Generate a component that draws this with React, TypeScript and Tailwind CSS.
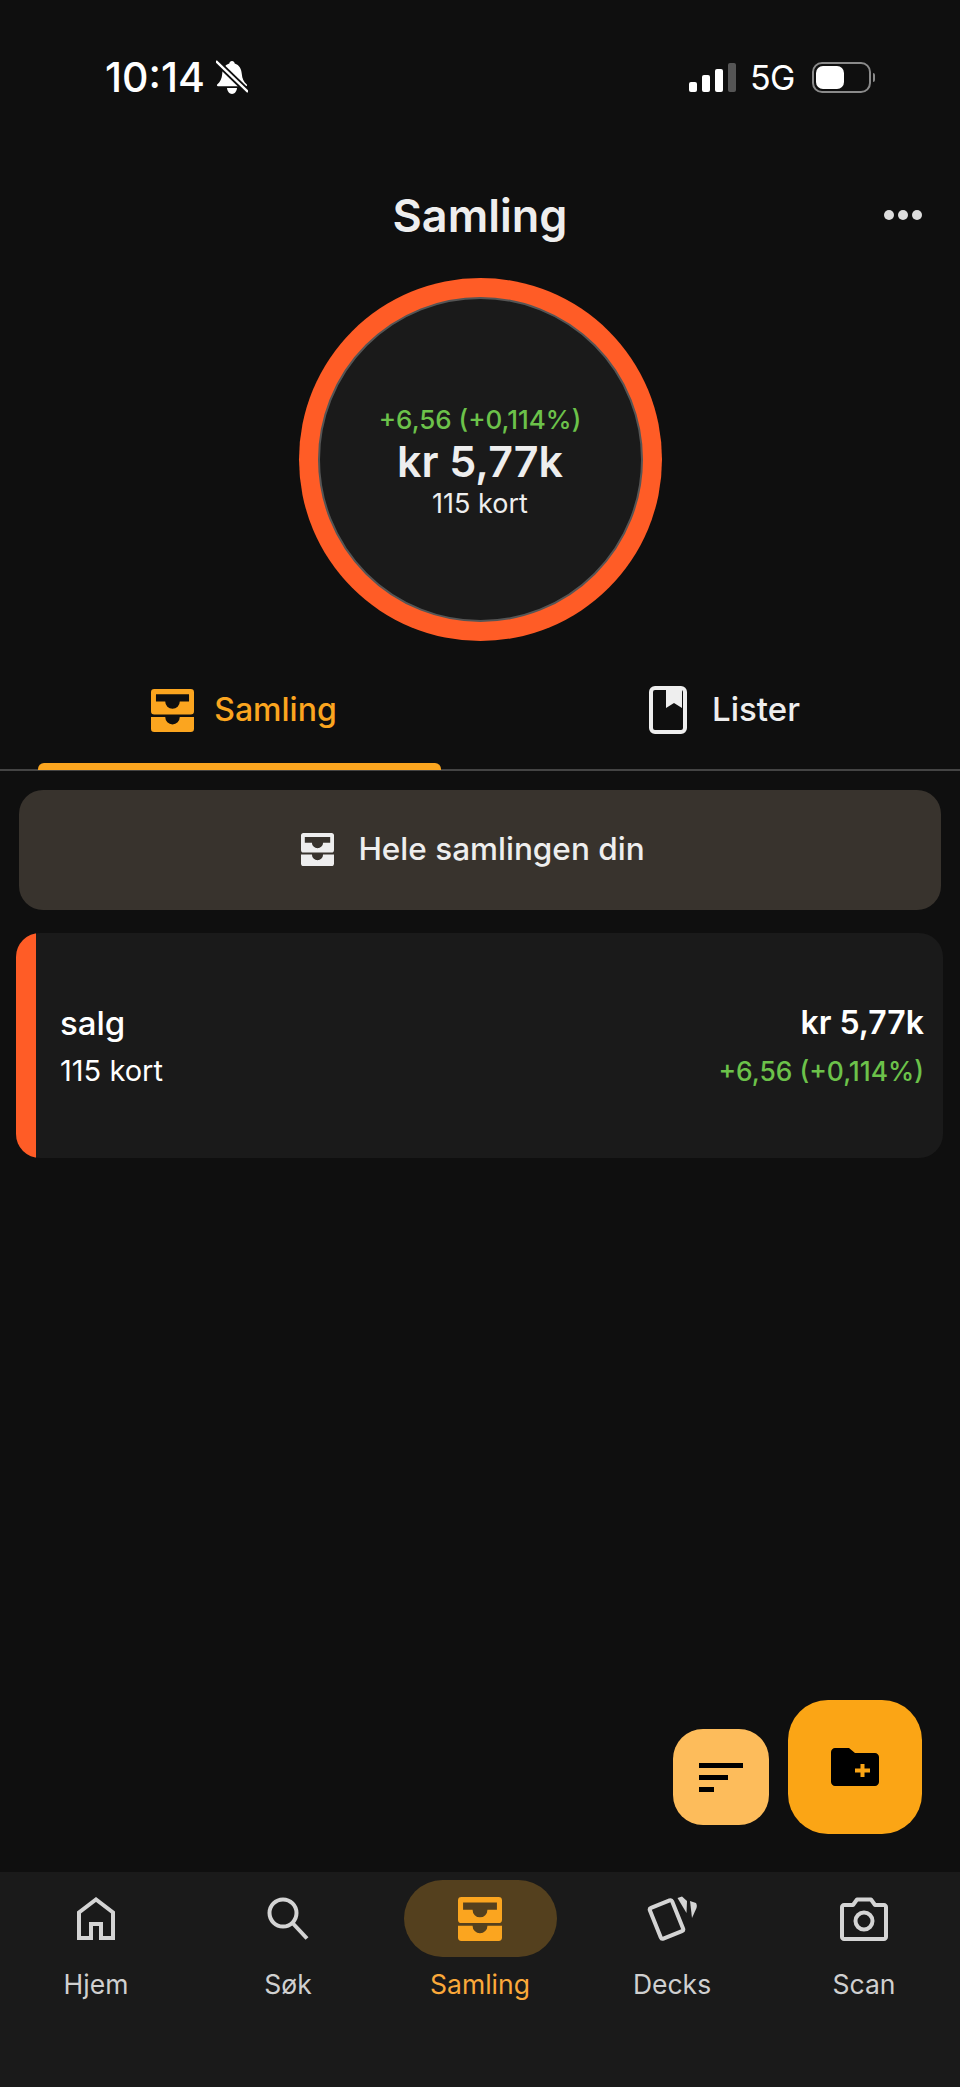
const font = { fontFamily: "Inter, 'Noto Sans', sans-serif" };

function Tray({ className }: { className: string }) {
  return (
    <svg viewBox="0 0 130 130" className={className} fill="currentColor">
      <path
        fillRule="evenodd"
        d="M10 0H120a10 10 0 0 1 10 10V67a10 10 0 0 1-10 10H10A10 10 0 0 1 0 67V10A10 10 0 0 1 10 0ZM15 16V38H43A22 22 0 0 0 87 38H115V16Z"
      />
      <path d="M0 85H43A22 22 0 0 0 87 85H130V120a10 10 0 0 1-10 10H10a10 10 0 0 1-10-10Z" />
    </svg>
  );
}

function BookIcon() {
  return (
    <svg viewBox="0 0 38 48" className="h-[48px] w-[38px]" fill="none">
      <rect x="2" y="2" width="34" height="44" rx="4" stroke="#eeeeee" strokeWidth="4" />
      <path d="M17 2H33V22L25 17L17 22Z" fill="#eeeeee" />
    </svg>
  );
}

function BellOff() {
  return (
    <svg viewBox="0 0 32 35" className="ml-[11px] h-[35px] w-[32px]" fill="#ffffff">
      <path d="M16 1c-1.5 0-2.5 1-2.7 2.5C8.5 5 6.5 9 6.2 14c-.3 4.5-2 8-5 10.5-.6.6-.2 1.8.8 1.8h28c1 0 1.4-1.2.8-1.8-3-2.5-4.7-6-5-10.5-.3-5-2.3-9-7.1-10.5C18.5 2 17.5 1 16 1Z" />
      <path d="M11 28h10c-.2 3.200-2.400 6-5 6s-4.800-2.800-5-6Z" />
      <path d="M0 1L32 32" stroke="#0f0f0f" strokeWidth="6" />
      <path d="M0 1L32 32" stroke="#ffffff" strokeWidth="2.4" />
    </svg>
  );
}

function NavIcon({ name }: { name: string }) {
  if (name === "home")
    return (
      <svg viewBox="0 0 38 43" className="h-[43px] w-[38px]" fill="none" stroke="#d4d4d4" strokeWidth="4">
        <path d="M2 41V15.5L19 2.5L36 15.5V41H24V27H14V41Z" strokeLinejoin="miter" />
      </svg>
    );
  if (name === "search")
    return (
      <svg viewBox="0 0 42 43" className="h-[43px] w-[42px]" fill="none" stroke="#d4d4d4" strokeWidth="4">
        <circle cx="16" cy="16" r="13.5" />
        <path d="M25.5 26L40 41.5" />
      </svg>
    );
  if (name === "decks")
    return (
      <svg viewBox="0 0 50 46" className="h-[46px] w-[50px]" fill="none">
        <rect x="7.500" y="7" width="24" height="33" rx="2" transform="rotate(-22 19.500 23.500)" stroke="#d4d4d4" strokeWidth="4" />
        <path d="M30.500 2L35 0.500L40 5L39.500 17Z" fill="#d4d4d4" />
        <path d="M43 5L49 7C50 9 50 10 49.500 12L45 22Z" fill="#d4d4d4" />
      </svg>
    );
  return (
    <svg viewBox="0 0 48 44" className="h-[44px] w-[48px]" fill="none" stroke="#d4d4d4" strokeWidth="4">
      <path d="M4 8H13L17 2.500H31L35 8H44C45 8 46 9 46 10V40C46 41 45 42 44 42H4C3 42 2 41 2 40V10C2 9 3 8 4 8Z" strokeLinejoin="round" />
      <circle cx="24" cy="24" r="8.500" />
    </svg>
  );
}

const navItems = [
  { label: "Hjem", icon: "home" },
  { label: "Søk", icon: "search" },
  { label: "Samling", icon: "tray" },
  { label: "Decks", icon: "decks" },
  { label: "Scan", icon: "camera" },
];

export default function App() {
  return (
    <div style={font} className="relative flex h-[2087px] w-[960px] flex-col overflow-hidden bg-[#0f0f0f] text-[#eeeeee]">
      {/* status bar */}
      <div className="flex h-[190px] items-start justify-between pt-[55px] pl-[105px] pr-[85px]">
        <div className="flex h-[45px] items-center">
          <span className="text-[41px] leading-none font-medium text-white">10:14</span>
          <BellOff />
        </div>
        <div className="flex h-[45px] items-center">
          <div className="flex h-[29px] items-end gap-[5px]">
            <span className="h-[10px] w-[8px] rounded-[2px] bg-white" />
            <span className="h-[17px] w-[8px] rounded-[2px] bg-white" />
            <span className="h-[23px] w-[8px] rounded-[2px] bg-white" />
            <span className="h-[29px] w-[8px] rounded-[2px] bg-[#555555]" />
          </div>
          <span className="ml-[14px] text-[34px] leading-none tracking-[-0.5px] text-white">5G</span>
          <div className="ml-[17px] flex h-[31px] w-[59px] items-center rounded-[10px] border-2 border-[#8a8a8a] px-[2px]">
            <span className="h-[23px] w-[28px] rounded-[7px] bg-white" />
          </div>
          <span className="ml-[2px] h-[9px] w-[2px] rounded-r-full bg-[#8a8a8a]" />
        </div>
      </div>

      {/* header */}
      <div className="relative flex h-[50px] items-center justify-center">
        <h1 className="text-[45px] leading-none font-semibold">Samling</h1>
        <div className="absolute top-[20px] left-[884px] flex gap-[4px]">
          <span className="h-[10px] w-[10px] rounded-full bg-[#dddddd]" />
          <span className="h-[10px] w-[10px] rounded-full bg-[#dddddd]" />
          <span className="h-[10px] w-[10px] rounded-full bg-[#dddddd]" />
        </div>
      </div>

      {/* value ring */}
      <div className="mt-[38px] flex justify-center">
        <div className="flex h-[363px] w-[363px] items-center justify-center rounded-full bg-[#ff5c26]">
          <div className="flex h-[325px] w-[325px] flex-col items-center justify-center rounded-full border-2 border-[#555555] bg-[#1a1a1a] pt-[4px]">
            <span className="text-[26px] leading-[34px] font-medium text-[#6cc24a]">+6,56 (+0,114%)</span>
            <span className="mb-[2px] text-[43px] leading-[48px] font-semibold">kr 5,77k</span>
            <span className="text-[27px] leading-[34px]">115 kort</span>
          </div>
        </div>
      </div>

      {/* tabs */}
      <div className="flex h-[130px] border-b-2 border-[#444444]">
        <div className="relative flex w-[480px] items-center justify-center gap-[20px] pt-[10px] pl-[8px] text-[32px] font-medium text-[#fba51f]">
          <Tray className="h-[43px] w-[43px]" />
          <span>Samling</span>
          <span className="absolute -bottom-[1px] left-[38px] h-[7px] w-[403px] rounded-t-[6px] bg-[#fba51f]" />
        </div>
        <div className="flex w-[480px] items-center justify-center gap-[25px] pt-[10px] pl-[9px] text-[33px] font-medium">
          <BookIcon />
          <span>Lister</span>
        </div>
      </div>

      {/* content */}
      <div className="flex flex-1 flex-col px-[16px] pt-[19px]">
        <div className="mx-[3px] flex h-[120px] items-center justify-center gap-[24px] rounded-[24px] bg-[#38332d] pr-[14px] pb-[2px] text-[31.5px] font-medium">
          <Tray className="h-[33px] w-[33px]" />
          <span>Hele samlingen din</span>
        </div>
        <div className="mt-[23px] flex h-[225px] w-[927px] items-stretch overflow-hidden rounded-[24px] bg-[#1a1a1a]">
          <div className="w-[20px] bg-[#ff5c26]" />
          <div className="flex flex-1 items-center justify-between pt-[2px] pl-[24px] pr-[19px]">
            <div className="flex flex-col gap-[12px]">
              <span className="text-[33px] leading-[36px] font-medium text-white">salg</span>
              <span className="text-[29px] leading-[36px] text-white">115 kort</span>
            </div>
            <div className="flex flex-col items-end gap-[12px]">
              <span className="text-[32px] leading-[36px] font-semibold text-white">kr 5,77k</span>
              <span className="text-[26.400px] leading-[36px] font-medium text-[#6cc24a]">+6,56 (+0,114%)</span>
            </div>
          </div>
        </div>
      </div>

      {/* floating buttons */}
      <div className="absolute top-[1700px] left-[673px] flex items-end gap-[19px]">
        <div className="mb-[9px] flex h-[96px] w-[96px] flex-col items-start justify-center gap-[7px] rounded-[30px] bg-[#fdbc5b] pl-[26px]">
          <span className="h-[5px] w-[44px] bg-black" />
          <span className="h-[5px] w-[29px] bg-black" />
          <span className="h-[5px] w-[15px] bg-black" />
        </div>
        <div className="flex h-[134px] w-[134px] items-center justify-center rounded-[40px] bg-[#fba515]">
          <svg viewBox="0 0 48 38" className="h-[38px] w-[48px]">
            <path d="M4 0H18L24 5H44C46 5 48 7 48 9V34C48 36 46 38 44 38H4C2 38 0 36 0 34V4C0 2 2 0 4 0Z" fill="#000000" />
            <path d="M29.500 16H33.500V20.500H39V24.500H33.500V29H29.500V24.500H24V20.500H29.500Z" fill="#fba515" />
          </svg>
        </div>
      </div>

      {/* bottom nav */}
      <nav className="grid h-[215px] grid-cols-5 bg-[#1a1a1a]">
        {navItems.map((item) => (
          <div key={item.label} className="flex flex-col items-center">
            {item.icon === "tray" ? (
              <div className="mt-[8px] flex h-[77px] w-[153px] items-center justify-center rounded-full bg-[#54401e] text-[#fba51f]">
                <Tray className="h-[44px] w-[44px]" />
              </div>
            ) : (
              <div className="mt-[8px] flex h-[77px] items-center justify-center">
                <NavIcon name={item.icon} />
              </div>
            )}
            <span className={item.icon === "tray" ? "mt-[10px] text-[26.500px] leading-[34px] text-[#fba93a]" : "mt-[10px] text-[26.500px] leading-[34px] text-[#d0d0d0]"}>
              {item.label}
            </span>
          </div>
        ))}
      </nav>
    </div>
  );
}
